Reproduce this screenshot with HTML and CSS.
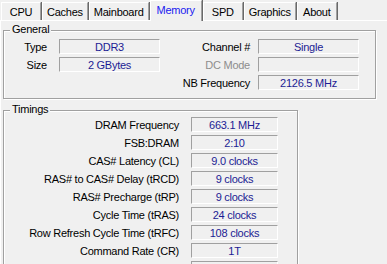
FILE: index.html
```html
<!DOCTYPE html>
<html lang="en">
<head>
    <meta charset="UTF-8">
    <title>CPU-Z - Memory</title>
    <meta name="viewport" content="width=device-width, initial-scale=1.0">
    <link rel="stylesheet" href="styles.css">
</head>
<body>
    <div class="tabs">
        <div class="tab">CPU</div>
        <div class="tab">Caches</div>
        <div class="tab">Mainboard</div>
        <div class="tab active">Memory</div>
        <div class="tab">SPD</div>
        <div class="tab">Graphics</div>
        <div class="tab">About</div>
    </div>

    <div class="page">
        <div class="group general">
            <span class="title">General</span>
            <div class="cols">
                <div class="col left">
                    <div class="row"><span class="lbl">Type</span><span class="field">DDR3</span></div>
                    <div class="row"><span class="lbl">Size</span><span class="field">2 GBytes</span></div>
                </div>
                <div class="col right">
                    <div class="row"><span class="lbl">Channel #</span><span class="field">Single</span></div>
                    <div class="row"><span class="lbl off">DC Mode</span><span class="field"></span></div>
                    <div class="row"><span class="lbl">NB Frequency</span><span class="field">2126.5 MHz</span></div>
                </div>
            </div>
        </div>

        <div class="group timings">
            <span class="title">Timings</span>
            <div class="row"><span class="lbl">DRAM Frequency</span><span class="field">663.1 MHz</span></div>
            <div class="row"><span class="lbl">FSB:DRAM</span><span class="field">2:10</span></div>
            <div class="row"><span class="lbl">CAS# Latency (CL)</span><span class="field">9.0 clocks</span></div>
            <div class="row"><span class="lbl">RAS# to CAS# Delay (tRCD)</span><span class="field">9 clocks</span></div>
            <div class="row"><span class="lbl">RAS# Precharge (tRP)</span><span class="field">9 clocks</span></div>
            <div class="row"><span class="lbl">Cycle Time (tRAS)</span><span class="field">24 clocks</span></div>
            <div class="row"><span class="lbl">Row Refresh Cycle Time (tRFC)</span><span class="field">108 clocks</span></div>
            <div class="row"><span class="lbl">Command Rate (CR)</span><span class="field">1T</span></div>
            <div class="row"><span class="lbl"></span><span class="field"></span></div>
        </div>
    </div>
</body>
</html>
```

FILE: styles.css
```css
* { box-sizing: border-box; }
html, body { height: 264px; overflow: hidden; }
body { margin: 0; background: #f0f0f0; font-family: "Liberation Sans", Arial, sans-serif; font-size: 11px; letter-spacing: -0.25px; color: #000; }

/* tab strip */
.tabs { display: flex; align-items: flex-end; height: 20px; padding-left: 1px; position: relative; z-index: 1; }
.tab { height: 18px; min-width: 40px; padding: 1px 4px 0; line-height: 16px; text-align: center; white-space: nowrap;
    border-top: 1px solid #fff; border-left: 1px solid #fff; border-right: 1px solid #a0a0a0; box-shadow: 1px 0 0 #696969; margin-right: 1px; }
.tab.active { height: 21px; margin-bottom: -1px; padding: 1px 6px 0; color: #2020f0; background: #f0f0f0; }

.page { border-top: 1px solid #fff; border-left: 1px solid #fff; padding: 9px 0 0 2px; height: 244px; overflow: hidden; }

/* etched group boxes */
.group { position: relative; border: 1px solid #a0a0a0; box-shadow: inset 1px 1px 0 #fff, 1px 1px 0 #fff; }
.title { position: absolute; left: 6px; top: -8px; padding: 0 2px; background: #f0f0f0; line-height: 13px; }
.general { width: 373px; height: 69px; padding-top: 8px; }
.timings { width: 295px; height: 170px; margin-top: 11px; padding-top: 6px; }

.cols { display: flex; }
.row { display: flex; height: 15px; margin-bottom: 3px; }
.lbl { text-align: right; line-height: 17px; white-space: nowrap; }
.lbl.off { color: #8d8d8d; }
.field { border: 1px solid; border-color: #a0a0a0 #fff #fff #a0a0a0; text-align: center; line-height: 15px; color: #1c1c94; white-space: nowrap; }

.left .lbl { width: 43px; margin-right: 12px; }
.right { margin-left: 10px; }
.right .lbl { width: 80px; margin-right: 8px; }
.general .field { width: 101px; }

.timings .lbl { width: 175px; margin-right: 12px; }
.timings .field { width: 87px; }
```
